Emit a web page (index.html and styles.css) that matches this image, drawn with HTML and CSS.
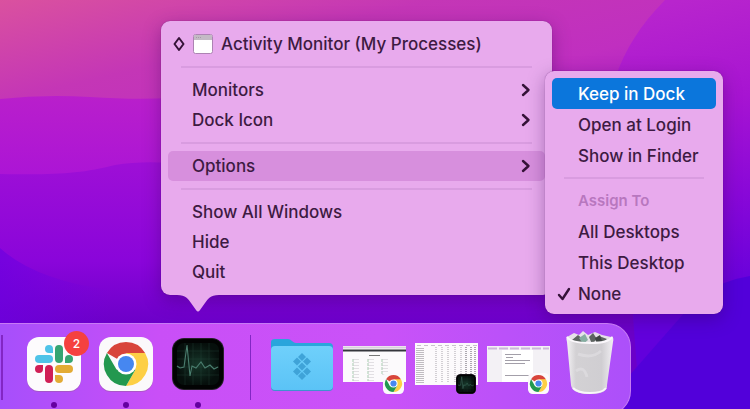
FILE: index.html
```
<!DOCTYPE html>
<html lang="en">
<head>
    <meta charset="UTF-8">
    <meta name="viewport" content="width=device-width, initial-scale=1.0">
    <title>Activity Monitor - Dock</title>
    <link rel="stylesheet" href="styles.css">
</head>
<body>
    <!-- shared icon shapes -->
    <svg class="sprite" aria-hidden="true">
        <defs>
            <radialGradient id="screen">
                <stop offset="0" stop-color="#16362a"/>
                <stop offset="1" stop-color="#060f0c"/>
            </radialGradient>
            <linearGradient id="folder-front" x1="0" y1="0" x2="0" y2="1">
                <stop offset="0" stop-color="#6fd0fb"/>
                <stop offset="1" stop-color="#5bc3f6"/>
            </linearGradient>
            <linearGradient id="bin" x1="0" y1="0" x2="1" y2="0">
                <stop offset="0" stop-color="#f4f2f5"/>
                <stop offset=".2" stop-color="#d3d1d4"/>
                <stop offset=".75" stop-color="#d0ced2"/>
                <stop offset="1" stop-color="#f1eff3"/>
            </linearGradient>
            <symbol id="chrome" viewBox="0 0 54 54">
                <rect width="54" height="54" rx="12" fill="#fbf9fb"/>
                <path d="M27 27 7.900 16A22 22 0 0 1 46.100 16z" fill="#d8453b"/>
                <path d="M27 16H46.100A22 22 0 0 1 27 49L36.500 32.500z" fill="#fdcf45"/>
                <path d="M7.900 16A22 22 0 0 0 27 49L36.500 32.500 17.500 32.500z" fill="#23984f"/>
                <circle cx="27" cy="27" r="10.500" fill="#fff"/>
                <circle cx="27" cy="27" r="8" fill="#4687f0"/>
            </symbol>
            <symbol id="monitor" viewBox="0 0 52 52">
                <rect width="52" height="52" rx="12" fill="#28202c"/>
                <rect x="1" y="1" width="50" height="50" rx="11" fill="#020303"/>
                <rect x="5" y="5" width="42" height="42" rx="7" fill="url(#screen)"/>
                <path d="M5 13H47M5 21H47M5 29H47M5 37H47M13 5V47M21 5V47M29 5V47M37 5V47" stroke="#2d5144" stroke-width=".6" opacity=".5"/>
                <path d="M5 28 8 30 12 29 15 7 18 38 20 28 24 30 29 24 33 30 38 27 42 31 46 29" fill="none" stroke="#4a7d6e" stroke-width="1.100"/>
            </symbol>
        </defs>
    </svg>

    <main class="desktop">
        <svg class="wallpaper" viewBox="0 0 750 409" preserveAspectRatio="none" aria-hidden="true">
            <defs>
                <linearGradient id="top" gradientUnits="userSpaceOnUse" x1="0" y1="0" x2="70" y2="300">
                    <stop offset="0" stop-color="#da519f"/>
                    <stop offset=".32" stop-color="#c436b6"/>
                    <stop offset=".6" stop-color="#c02fc0"/>
                    <stop offset="1" stop-color="#9a0cd0"/>
                </linearGradient>
                <linearGradient id="mid" gradientUnits="userSpaceOnUse" x1="0" y1="95" x2="0" y2="180">
                    <stop offset="0" stop-color="#b91fcb"/>
                    <stop offset="1" stop-color="#ab14d6"/>
                </linearGradient>
                <linearGradient id="low" gradientUnits="userSpaceOnUse" x1="0" y1="165" x2="0" y2="325">
                    <stop offset="0" stop-color="#9d0fd6"/>
                    <stop offset=".6" stop-color="#8a05da"/>
                    <stop offset="1" stop-color="#6b00c8"/>
                </linearGradient>
                <linearGradient id="corner" gradientUnits="userSpaceOnUse" x1="0" y1="0" x2="110" y2="0">
                    <stop offset="0" stop-color="#6c00e0" stop-opacity=".7"/>
                    <stop offset="1" stop-color="#6c00e0" stop-opacity="0"/>
                </linearGradient>
                <linearGradient id="right" gradientUnits="userSpaceOnUse" x1="680" y1="0" x2="750" y2="300">
                    <stop offset="0" stop-color="#b825cd"/>
                    <stop offset=".35" stop-color="#a714d2"/>
                    <stop offset=".65" stop-color="#8a08d8"/>
                    <stop offset="1" stop-color="#6200dc"/>
                </linearGradient>
            </defs>
            <rect width="750" height="409" fill="url(#top)"/>
            <path d="M0 99Q45 94 90 97T170 98V409H0z" fill="url(#mid)"/>
            <path d="M0 174C55 175 80 174 115 165Q140 161 170 163L650 200V409H0z" fill="url(#low)"/>
            <path d="M0 248Q35 280 110 290V325H0z" fill="url(#corner)"/>
            <path d="M665 0C640 25 625 50 615 78L640 409H750V0z" fill="url(#right)"/>
            <path d="M750 276Q725 280 700 295L600 409H750z" fill="#5200da"/>
        </svg>

        <nav class="menu main-menu" aria-label="Activity Monitor">
            <button class="item window-item">
                <svg class="diamond" width="12" height="16" viewBox="0 0 12 16"><path d="M6 2 10.500 8 6 14 1.500 8z"/></svg>
                <svg width="20" height="20" viewBox="0 0 20 20">
                    <rect x=".5" y=".5" width="19" height="19" rx="2" fill="#fff" stroke="#ad83b3"/>
                    <path d="M1 2Q1 1 2 1H18Q19 1 19 2V6H1z" fill="#c3bac4"/>
                    <path d="M3 3.500H8" stroke="#a69ba8" stroke-dasharray="1 1"/>
                </svg>
                Activity Monitor (My Processes)
            </button>
            <hr>
            <button class="item">Monitors <svg class="chevron" width="10" height="14" viewBox="0 0 10 14"><path d="M2 2 7.500 7 2 12"/></svg></button>
            <button class="item">Dock Icon <svg class="chevron" width="10" height="14" viewBox="0 0 10 14"><path d="M2 2 7.500 7 2 12"/></svg></button>
            <hr>
            <button class="item open">Options <svg class="chevron" width="10" height="14" viewBox="0 0 10 14"><path d="M2 2 7.500 7 2 12"/></svg></button>
            <hr>
            <button class="item">Show All Windows</button>
            <button class="item">Hide</button>
            <button class="item">Quit</button>
            <svg class="pointer" width="42" height="17" viewBox="0 0 42 17"><path d="M0 0C9 0 11 4 14 8L19 15Q21 18 23 15L28 8C31 4 33 0 42 0z"/></svg>
        </nav>

        <nav class="menu sub-menu" aria-label="Options">
            <button class="item selected">Keep in Dock</button>
            <button class="item">Open at Login</button>
            <button class="item">Show in Finder</button>
            <hr>
            <h2 class="heading">Assign To</h2>
            <button class="item">All Desktops</button>
            <button class="item">This Desktop</button>
            <button class="item checked">
                <svg class="check" width="14" height="16" viewBox="0 0 14 16"><path d="M2 9 5.500 13 12 3"/></svg>
                None
            </button>
        </nav>

        <footer class="dock">
            <span class="divider"></span>
            <button class="app running" aria-label="Slack">
                <svg width="72" height="68" viewBox="0 0 72 68">
                    <rect x="9" y="11" width="54" height="54" rx="12" fill="#9c5aa8" opacity=".6"/>
                    <rect x="9" y="10" width="54" height="54" rx="12" fill="#fdfbfd"/>
                    <g fill="#4fc3e8">
                        <path d="M35 26H31A4 4 0 1 1 35 22z"/>
                        <rect x="17" y="28" width="18" height="8" rx="4"/>
                    </g>
                    <g fill="#35a572">
                        <rect x="37" y="18" width="8" height="18" rx="4"/>
                        <path d="M47 36V32A4 4 0 1 1 51 36z"/>
                    </g>
                    <g fill="#d01f56">
                        <path d="M25 38V42A4 4 0 1 1 21 38z"/>
                        <rect x="27" y="38" width="8" height="18" rx="4"/>
                    </g>
                    <g fill="#e3ab35">
                        <rect x="37" y="38" width="18" height="8" rx="4"/>
                        <path d="M37 48H41A4 4 0 1 1 37 52z"/>
                    </g>
                </svg>
                <span class="badge">2</span>
            </button>
            <button class="app running" aria-label="Chrome">
                <svg width="72" height="68" viewBox="0 0 72 68">
                    <rect x="9" y="11" width="54" height="54" rx="12" fill="#9c5aa8" opacity=".6"/>
                    <use href="#chrome" x="9" y="10" width="54" height="54"/>
                </svg>
            </button>
            <button class="app running" aria-label="Activity Monitor">
                <svg width="72" height="68" viewBox="0 0 72 68"><use href="#monitor" x="10" y="11" width="52" height="52"/></svg>
            </button>
            <span class="divider middle"></span>
            <button class="app" aria-label="Folder">
                <svg width="72" height="68" viewBox="0 0 72 68">
                    <path d="M5 15Q5 12 9 12H22Q24 12 26 14T30 16H63Q67 16 67 20V30H5z" fill="#2aa5dc"/>
                    <rect x="5" y="19" width="62" height="45" rx="4" fill="#3e92ce"/>
                    <rect x="5" y="19" width="62" height="44" rx="4" fill="url(#folder-front)"/>
                    <path d="M36 26 40 30 36 34 32 30zM31 30.500 35 34.500 31 38.500 27 34.500zM41 30.500 45 34.500 41 38.500 37 34.500zM36 35.500 40 39.500 36 43.500 32 39.500zM31 40.500 35 44.500 31 48.500 27 44.500zM41 40.500 45 44.500 41 48.500 37 44.500zM36 45 40 49 36 53 32 49z" fill="#3fa3d8"/>
                </svg>
            </button>
            <button class="app" aria-label="Minimized Chrome window">
                <svg width="72" height="68" viewBox="0 0 72 68">
                    <rect x="5" y="19" width="63" height="36" fill="#fcfafc"/>
                    <path d="M5 20.500H68" stroke="#d8cfdb" stroke-width="2"/>
                    <path d="M5 23.500H68" stroke="#35363c" stroke-width="2"/>
                    <path d="M31 28.500H42" stroke="#777" stroke-width="1"/>
                    <path d="M15 32V54M30 32V54M44 32V48" stroke="#a8ccb0" stroke-width="1" stroke-dasharray="3 1"/>
                    <path d="M18 32V54M33 32V54M47 32V48" stroke="#c9c6cb" stroke-width="6" stroke-dasharray="1 2" opacity=".5"/>
                    <use href="#chrome" x="45" y="46" width="21" height="21"/>
                </svg>
            </button>
            <button class="app" aria-label="Minimized Activity Monitor window">
                <svg width="72" height="68" viewBox="0 0 72 68">
                    <rect x="5" y="16" width="63" height="42" fill="#fcfafc"/>
                    <path d="M7 18.500H67" stroke="#c9c2cc" stroke-dasharray="4 3"/>
                    <path d="M10 21V56" stroke="#858087" stroke-width="8" stroke-dasharray="1 1" opacity=".5"/>
                    <path d="M26 20V56M32 20V56M38 20V56M45 20V56M51 20V56" stroke="#aaa5ad" stroke-dasharray="1 1"/>
                    <path d="M56 20V56M61 20V56M65 20V56" stroke="#8c8790" stroke-width="2" stroke-dasharray="1 1" opacity=".7"/>
                    <use href="#monitor" x="46" y="47" width="20" height="20"/>
                </svg>
            </button>
            <button class="app" aria-label="Minimized Chrome document">
                <svg width="72" height="68" viewBox="0 0 72 68">
                    <rect x="5" y="19" width="63" height="36" fill="#f3f1f5"/>
                    <rect x="20" y="23" width="31" height="32" fill="#fff"/>
                    <path d="M6 21.500H67" stroke="#cdb6dc" stroke-width="2" stroke-dasharray="9 2"/>
                    <path d="M23 27.500H39M24 30.500H31M23 33.500H48M23 36.500H43M23 48.500H48" stroke="#a39fa9"/>
                    <use href="#chrome" x="46" y="46" width="21" height="21"/>
                </svg>
            </button>
            <button class="app" aria-label="Trash">
                <svg width="72" height="68" viewBox="0 0 72 68">
                    <path d="M13 10 20 6 25 8 29 4 34 8 41 5 48 8 57 10 55 18H15z" fill="#e6e2e8"/>
                    <path d="M18 13 24 8 31 14 27 18zM35 10 39 6 43 12 38 17zM45 9 53 12 48 16z" fill="#5d6461"/>
                    <path d="M25 11 31 7 34 13 29 17z" fill="#86ada1"/>
                    <path d="M41 11 46 8 48 14 43 17z" fill="#3f4543"/>
                    <path d="M13 9Q12 11 13 15L17 58Q18 67 36 67T53 58L59 15Q60 11 58 9Q55 16 36 16T13 9z" fill="url(#bin)"/>
                    <path d="M13 10Q17 16 36 16T58 10" fill="none" stroke="#faf7fb" stroke-width="2"/>
                    <path d="M24 27Q38 32 47 24M22 44Q30 38 33 50" fill="none" stroke="#e6e4e7" stroke-width="3" opacity=".5"/>
                    <path d="M19 61Q24 66 36 66T52 61" fill="none" stroke="#f8f6f9" stroke-width="2"/>
                </svg>
            </button>
        </footer>
    </main>
</body>
</html>
```

FILE: styles.css
```
* {
    margin: 0;
    padding: 0;
    box-sizing: border-box;
}

body {
    font-family: Inter, "Liberation Sans", sans-serif;
    font-size: 17px;
    font-weight: 500;
    color: #3d1a42;
}

button {
    font: inherit;
    color: inherit;
    background: none;
    border: 0;
}

.sprite {
    position: absolute;
    width: 0;
    height: 0;
}

.desktop {
    position: relative;
    min-height: 100vh;
    display: flex;
    align-items: flex-end;
    overflow: hidden;
    background: #6500d0;
}

.wallpaper {
    position: absolute;
    inset: 0;
    width: 100%;
    height: 100%;
}

/* menus */
.menu {
    position: absolute;
    display: flex;
    flex-direction: column;
    background: #e8aaed;
    border-radius: 9px;
    box-shadow: 0 0 1px rgba(60, 0, 80, 0.6), 0 5px 18px rgba(50, 0, 80, 0.35);
}

.main-menu {
    left: 161px;
    bottom: 114px;
    width: 391px;
    padding: 8px 7px;
}

.sub-menu {
    left: 545px;
    bottom: 95px;
    width: 178px;
    padding: 7px 7px 5px;
}

.item {
    display: flex;
    align-items: center;
    height: 30px;
    padding: 0 14px 0 24px;
    border-radius: 5px;
    text-align: left;
    white-space: nowrap;
}

.sub-menu .item {
    height: 31px;
    padding: 0 0 0 26px;
}

.main-menu .window-item {
    gap: 8px;
    padding-left: 5px;
}

.open {
    background: #d78fdd;
}

.sub-menu .selected {
    background: #0b76dc;
    color: #fff;
}

.sub-menu .checked {
    gap: 7px;
    padding-left: 5px;
}

.heading {
    height: 30px;
    padding-left: 26px;
    font-size: 15px;
    font-weight: 600;
    line-height: 30px;
    color: #b877bf;
}

.menu hr {
    height: 2px;
    margin: 7px 13px;
    border: 0;
    background: #d99ce0;
}

.sub-menu hr {
    margin: 6px 12px 7px;
}

.chevron {
    margin-left: auto;
}

.diamond path,
.chevron path,
.check path {
    fill: none;
    stroke: #351238;
    stroke-width: 2.4;
    stroke-linecap: round;
    stroke-linejoin: round;
}

.diamond path {
    stroke-width: 2;
}

.pointer {
    position: absolute;
    top: 100%;
    left: 16px;
    fill: #e8aaed;
}

/* dock */
.dock {
    position: relative;
    display: flex;
    margin-bottom: -6px;
    padding: 3px 4px 6px 1px;
    background: linear-gradient(90deg, #a64ffb, #c94ff7 25%, #ca52f8 60%, #ac50fa);
    border: 1px solid #c77af5;
    border-left: 0;
    border-radius: 0 24px 24px 0;
}

.divider {
    width: 2px;
    height: 65px;
    margin: 8px 15px 0 0;
    background: #8226c4;
}

.divider.middle {
    margin: 8px 15px 0 16px;
    width: 1px;
}

.app {
    position: relative;
    display: flex;
    flex-direction: column;
    align-items: center;
    justify-content: flex-start;
    width: 72px;
    height: 81px;
}

.app svg {
    display: block;
}

.running::after {
    content: "";
    width: 6px;
    height: 6px;
    margin-top: 7px;
    border-radius: 50%;
    background: #6500a0;
}

.badge {
    position: absolute;
    top: 4px;
    right: 1px;
    width: 25px;
    height: 25px;
    border-radius: 50%;
    background: #f5413f;
    color: #fff;
    font-size: 12px;
    line-height: 25px;
    text-align: center;
}
```
